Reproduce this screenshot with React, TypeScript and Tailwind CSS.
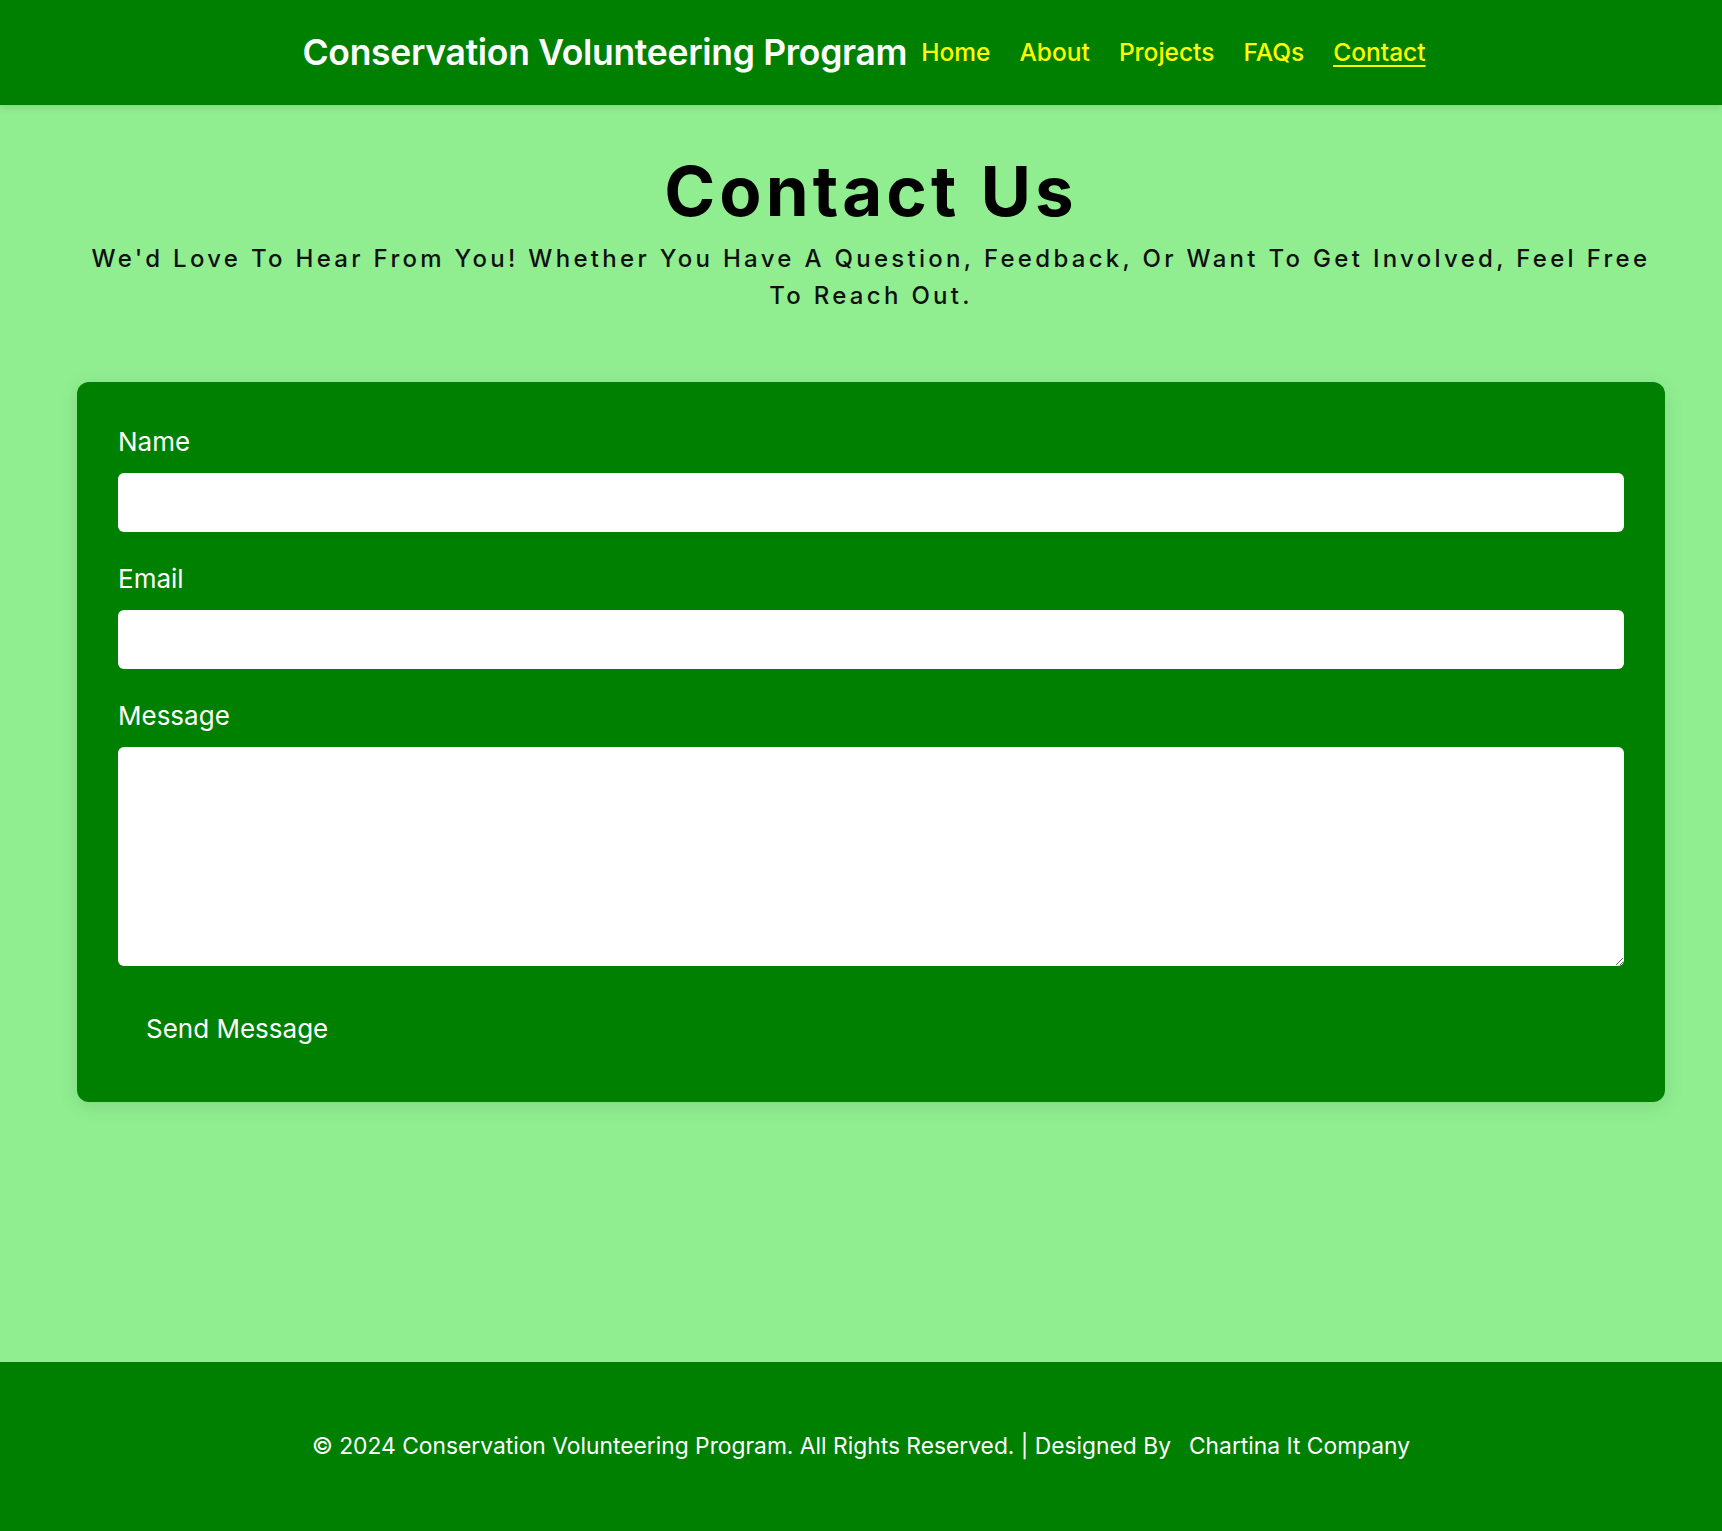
import React from 'react';

const links = ['Home', 'About', 'Projects', 'FAQs', 'Contact'];

function Field({ label, area }: { label: string; area?: boolean }) {
  return (
    <div className="mb-[27px]">
      <label className="block mb-[12px] text-[26px] leading-[39px] text-white">{label}</label>
      {area ? (
        <textarea className="block w-full h-[219px] rounded-[6px] bg-white outline-none" />
      ) : (
        <input type="text" className="block w-full h-[59px] rounded-[6px] bg-white outline-none" />
      )}
    </div>
  );
}

export default function App() {
  return (
    <div className="min-h-[1531px] flex flex-col bg-[#90ee90] font-['Inter',sans-serif]">
      <header className="relative z-10 h-[105px] shrink-0 pl-[6px] bg-[#008000] flex items-center justify-center gap-[14px] shadow-[0_2px_8px_rgba(0,0,0,0.12)]">
        <h1 className="text-white text-[35.5px] font-semibold tracking-[-0.3px]">Conservation Volunteering Program</h1>
        <nav className="flex gap-[29px]">
          {links.map((l) => (
            <a
              key={l}
              href="#"
              className={`text-[#ffff00] text-[24.5px] font-medium ${l === 'Contact' ? 'underline underline-offset-4' : ''}`}
            >
              {l}
            </a>
          ))}
        </nav>
      </header>

      <main className="flex-1 pt-[46px] pl-[20px]">
        <section className="text-center">
          <h2 className="text-[69px] leading-[80px] font-bold tracking-[4px] text-black">Contact Us</h2>
          <p className="mx-auto mt-[9px] max-w-[1600px] text-[24px] leading-[37px] font-medium tracking-[3.3px] capitalize text-[#111]">
            We'd love to hear from you! Whether you have a question, feedback, or want to get involved, feel free to reach out.
          </p>
        </section>

        <form className="mx-[57px] mt-[68px] rounded-xl bg-[#008000] px-[41px] pt-[40px] pb-[40px] shadow-[0_4px_20px_rgba(0,0,0,0.1)]">
          <Field label="Name" />
          <Field label="Email" />
          <Field label="Message" area />
          <button type="button" className="mt-[2px] px-[28px] py-[14px] text-[26px] leading-[39px] text-white bg-[#008000] rounded-md">
            Send Message
          </button>
        </form>
      </main>

      <footer className="h-[169px] shrink-0 bg-[#008000] flex items-center justify-center text-white text-[22.8px]">
        <p>
          © 2024 Conservation Volunteering Program. All Rights Reserved. | Designed By
          <a href="#" className="ml-[18px]">Chartina It Company</a>
        </p>
      </footer>
    </div>
  );
}
